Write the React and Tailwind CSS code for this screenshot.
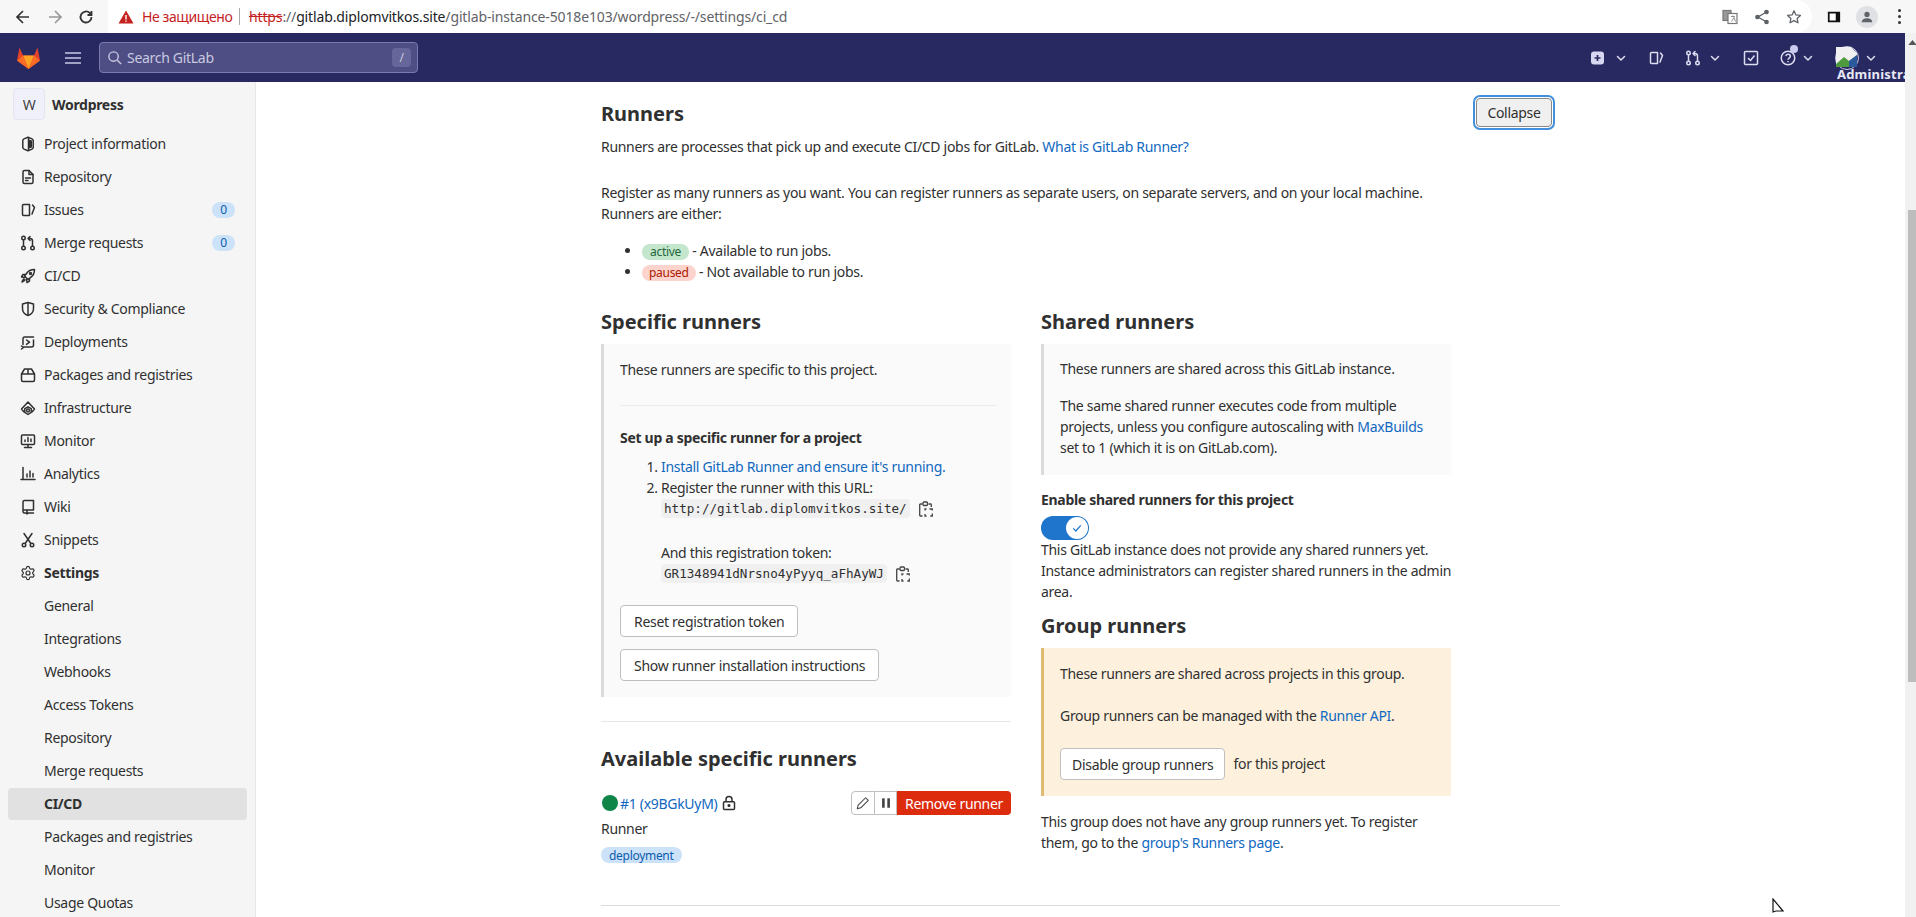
import React from 'react'
import { Settings } from 'lucide-react'

const I = ({ children, className = 'w-4 h-4' }) => (
  <svg viewBox="0 0 16 16" fill="none" stroke="currentColor" strokeWidth="1.5" strokeLinecap="round" strokeLinejoin="round" className={className + ' shrink-0'}>
    {children}
  </svg>
)

const ProjectIcon = () => <I><path d="M8 1.3 4 2.9c-.8.3-1.2 1-1.2 1.8v6.6c0 .8.4 1.500 1.200 1.800l4 1.600 4-1.600c.8-.3 1.200-1 1.200-1.800V4.700c0-.8-.4-1.500-1.200-1.800L8 1.300Z" /><path d="M9 2v12M9 3.500l3 1v7l-3 1" fill="currentColor" stroke="none" /><path d="M8.500 2v12" /></I>
const DocIcon = () => <I><path d="M3 3c0-1 .6-1.500 1.500-1.500H9L13 5.500v7.500c0 1-.6 1.500-1.500 1.500h-7C3.600 14.500 3 14 3 13V3Z" /><path d="M9 1.500v4h4M5.500 9h5M5.500 11.500h2.500" /></I>
const IssueIcon = () => <I><path d="M9.500 2.500H3.500c-.6 0-1 .4-1 1v9c0 .6.4 1 1 1h6V2.500Z" /><path d="M12.500 3 14.500 5.500 12 12" /></I>
const MrIcon = () => <I><circle cx="3.500" cy="3" r="1.750" /><circle cx="3.500" cy="13" r="1.750" /><circle cx="12.500" cy="13" r="1.750" /><path d="M3.500 4.750v6.500M12.500 11.250V6c0-1.500-.8-2.500-2.500-2.500H8M10 1.500 8 3.500l2 2" /></I>
const RocketIcon = () => <I><path d="M14.500 1.500c-4 0-6.500 1.500-8 4L4.500 8l3.500 3.500 2.500-2c2.500-1.500 4-4 4-8Z" /><path d="M5.500 6.500H3L1.500 9l3 .5M9.500 10.500V13L7 14.500l-.5-3M4 11c-1 .5-1.500 1.500-2 3 1.500-.5 2.500-1 3-2" /><circle cx="10.500" cy="5.500" r="1" /></I>
const ShieldIcon = () => <I><path d="M8 1.500 2.500 3v4.500c0 3.500 2.500 6 5.500 7 3-1 5.500-3.500 5.500-7V3L8 1.500Z" /><path d="M8 2v12" /></I>
const DeployIcon = () => <I><path d="M3 10.500V4.500c0-.8.6-1.500 1.500-1.500h9M13.500 6v5c0 1.200-.8 2-2 2H3.500M1.500 12l2 1.500-2 1.500" /><path d="m6.500 6 3 2.200-3 2.200" /></I>
const PackageIcon = () => <I><path d="M1.500 7v6c0 .8.6 1.500 1.500 1.500h10c.9 0 1.500-.7 1.500-1.500V7l-3-5H4.500l-3 5ZM1.500 7h13M8 2v5" /></I>
const InfraIcon = () => <I><path d="M4 12 1.500 9 8 2l6.500 7-2.500 3" /><circle cx="8" cy="10.500" r="1.400" /><path d="m8 6.800 3.200 1.900v3.600L8 14.500l-3.200-2.200V8.700L8 6.800Z" /></I>
const MonitorIcon = () => <I><rect x="1.500" y="2" width="13" height="9.500" rx="1" /><path d="M8 11.500V14M4.500 14.500h7M5 8.500V7M8 8.500V4.500M11 8.500V6" /></I>
const AnalyticsIcon = () => <I><path d="M3 1.500v12M1 13.500h14M7 11V8M10 11V5M13 11V7.500" /></I>
const WikiIcon = () => <I><path d="M13.500 11V1.500H4.500c-1 0-1.500.6-1.500 1.500v9.500c0 1 .6 1.500 1.500 1.500h9M3 11h10.500M7 11v4l1.500-1" /></I>
const SnippetIcon = () => <I><path d="M4 1.500 10.500 11M12 1.500 5.500 11" /><circle cx="4" cy="13" r="1.750" /><circle cx="12" cy="13" r="1.750" /></I>
const CopyIcon = () => (
  <svg viewBox="0 0 14 16" fill="none" stroke="currentColor" strokeWidth="1.300" className="w-[14px] h-4 shrink-0 text-[#444]">
    <path d="M3.500 3H1.500c-.5 0-.8.3-.8.8v10.400c0 .5.3.8.8.8h2M9.500 3h2c.5 0 .8.3.8.8V6" />
    <rect x="4" y="1" width="4.500" height="3.500" rx="1" />
    <path d="M7.500 8h-1.500v1.500M10.500 8h2.800v1.500M13.300 12.500V15h-2M6 13v2h1.500" />
  </svg>
)
const Chev = () => (
  <svg viewBox="0 0 12 12" fill="none" stroke="currentColor" strokeWidth="1.500" strokeLinecap="round" strokeLinejoin="round" className="w-3 h-3 shrink-0">
    <path d="m2.500 4.500 3.500 3.500 3.500-3.500" />
  </svg>
)

const navTop = [
  ['Project information', ProjectIcon],
  ['Repository', DocIcon],
  ['Issues', IssueIcon, '0'],
  ['Merge requests', MrIcon, '0'],
  ['CI/CD', RocketIcon],
  ['Security & Compliance', ShieldIcon],
  ['Deployments', DeployIcon],
  ['Packages and registries', PackageIcon],
  ['Infrastructure', InfraIcon],
  ['Monitor', MonitorIcon],
  ['Analytics', AnalyticsIcon],
  ['Wiki', WikiIcon],
  ['Snippets', SnippetIcon],
]
const navSub = ['General', 'Integrations', 'Webhooks', 'Access Tokens', 'Repository', 'Merge requests', 'CI/CD', 'Packages and registries', 'Monitor', 'Usage Quotas']

const Link = ({ children }) => <a className="text-[#1068bf]">{children}</a>
const Btn = ({ children, pad = 'px-[13px]' }) => (
  <button className={'block h-8 bg-white border border-[#bfbfbf] rounded text-[#303030] whitespace-nowrap ' + pad}>{children}</button>
)
const H4 = ({ children }) => <h4 className="text-[20px] leading-6 font-bold text-[#303030] tracking-normal">{children}</h4>

function BrowserBar() {
  return (
    <div className="h-[33px] bg-[#f7f7f7] flex items-center text-[#5f6368]">
      <svg viewBox="0 0 16 16" className="w-4 h-4 ml-[15px] text-[#333]" fill="none" stroke="currentColor" strokeWidth="1.700"><path d="M14 8H2.500M8 2 2 8l6 6" /></svg>
      <svg viewBox="0 0 16 16" className="w-4 h-4 ml-[16px] text-[#999]" fill="none" stroke="currentColor" strokeWidth="1.700"><path d="M2 8h11.500M8 2l6 6-6 6" /></svg>
      <svg viewBox="0 0 16 16" className="w-4 h-4 ml-[15px] text-[#333]" fill="none" stroke="currentColor" strokeWidth="1.800"><path d="M13.500 8a5.500 5.500 0 1 1-1.600-3.900L13.500 6M13.500 2v4h-4" /></svg>
      <div className="ml-[14px] w-[1704px] h-full bg-white rounded-r-full flex items-center">
        <svg viewBox="0 0 16 16" className="w-4 h-4 ml-[10px]"><path d="M8 1.500 15.500 14.500H.5L8 1.500Z" fill="#c5221f" /><path d="M8 6v4.500M8 11.500v1.200" stroke="#fff" strokeWidth="1.400" /></svg>
        <span className="ml-[8px] text-[14px] text-[#c5221f] tracking-[-0.4px] w-[92px] whitespace-nowrap">Не защищено</span>
        <span className="w-px h-[17px] bg-[#aaa] ml-[5px]" />
        <span className="ml-[9px] text-[14px] tracking-[-0.14px] whitespace-nowrap">
          <span className="text-[#c5221f] line-through">https</span>
          <span className="text-[#5f6368]">://</span>
          <span className="text-[#202124]">gitlab.diplomvitkos.site</span>
          <span className="text-[#5f6368]">/gitlab-instance-5018e103/wordpress/-/settings/ci_cd</span>
        </span>
        <svg viewBox="0 0 16 16" className="w-4 h-4 ml-auto" fill="none" stroke="#777" strokeWidth="1.200"><rect x="1" y="1.500" width="8" height="10" fill="#999" /><rect x="6" y="4.500" width="9" height="10" fill="#fff" /><path d="M9 7.500h4M11 6.500v1M9.500 12.500l2.500-4 1.500 4" strokeWidth=".8" /></svg>
        <svg viewBox="0 0 16 16" className="w-4 h-4 ml-[16px]" fill="none" stroke="#5f6368" strokeWidth="1.300"><path d="M12.500 3 4 8l8.500 5" /><circle cx="12.500" cy="3" r="1.700" fill="#5f6368" /><circle cx="3.500" cy="8" r="1.700" fill="#5f6368" /><circle cx="12.500" cy="13" r="1.700" fill="#5f6368" /></svg>
        <svg viewBox="0 0 16 16" className="w-4 h-4 ml-[16px] mr-[10px]" fill="none" stroke="#5f6368" strokeWidth="1.300" strokeLinejoin="round"><path d="m8 1.800 1.900 4.100 4.500.5-3.300 3 .9 4.400L8 11.600l-4 2.200.9-4.400-3.300-3 4.500-.5L8 1.800Z" /></svg>
      </div>
      <svg viewBox="0 0 16 16" className="w-[14px] h-[14px] ml-[15px]"><rect x="1" y="2" width="14" height="12" fill="#111" /><rect x="3" y="4" width="7" height="8" fill="#fff" /></svg>
      <div className="ml-[15px] w-[22px] h-[22px] rounded-full bg-[#dfe1e5] flex items-center justify-center">
        <svg viewBox="0 0 16 16" className="w-[14px] h-[14px]" fill="#5f6368"><circle cx="8" cy="5" r="3" /><path d="M2 14c0-3 3-4.500 6-4.500s6 1.500 6 4.500H2Z" /></svg>
      </div>
      <div className="ml-[20px] flex flex-col gap-[3px]">
        <span className="w-[3px] h-[3px] rounded-full bg-[#333]" />
        <span className="w-[3px] h-[3px] rounded-full bg-[#333]" />
        <span className="w-[3px] h-[3px] rounded-full bg-[#333]" />
      </div>
    </div>
  )
}

function TopNav() {
  return (
    <header className="h-[49px] shrink-0 bg-[#292961] flex items-center text-[#d1d0d3] relative">
      <svg viewBox="0 0 25 24" className="w-[25px] h-[24px] ml-[16px]">
        <path d="M12.500 23 1 14.500 3.500 1.500l3.500 8h11l3.500-8L24 14.500 12.500 23Z" fill="#e24329" />
        <path d="M12.500 23 7 9.500h11L12.500 23Z" fill="#fca326" />
        <path d="M12.500 23 1 14.500l2-1.500L12.500 23Z" fill="#fc6d26" />
        <path d="M12.500 23 24 14.500l-2-1.500-9.500 10Z" fill="#fc6d26" />
        <path d="M12.500 23 3 13l4-3.500L12.500 23ZM12.500 23 22 13l-4-3.500L12.500 23Z" fill="#fc6d26" />
      </svg>
      <svg viewBox="0 0 16 16" className="w-4 h-4 ml-[24px]" fill="none" stroke="#c9c9e8" strokeWidth="1.500"><path d="M0 3h16M0 8h16M0 13h16" /></svg>
      <div className="ml-[18px] w-[319px] h-[31px] rounded bg-[#4e4e84] border border-[#7a7ab0] flex items-center text-[#c9c9e0]">
        <svg viewBox="0 0 16 16" className="w-[15px] h-[15px] ml-[7px]" fill="none" stroke="currentColor" strokeWidth="1.500"><circle cx="7" cy="7" r="5" /><path d="m11 11 4 4" /></svg>
        <span className="ml-[5px] text-[14px]">Search GitLab</span>
        <span className="ml-auto mr-[6px] w-[19px] h-[19px] rounded-sm bg-[#66669a] text-[12px] flex items-center justify-center">/</span>
      </div>
      <div className="ml-auto mr-[28px] flex items-center text-[#dcdcf0]">
        <svg viewBox="0 0 16 16" className="w-4 h-4"><rect x="1" y="1.500" width="13" height="13" rx="3" fill="#d7d7f2" /><path d="M7.500 5v6M4.500 8h6" stroke="#292961" strokeWidth="1.700" /></svg>
        <span className="ml-[9px]"><Chev /></span>
        <span className="ml-[21px]"><IssueIcon /></span>
        <span className="ml-[21px]"><MrIcon /></span>
        <span className="ml-[8px]"><Chev /></span>
        <svg viewBox="0 0 16 16" className="w-4 h-4 ml-[22px]" fill="none" stroke="currentColor" strokeWidth="1.500" strokeLinejoin="round"><rect x="1.500" y="1.500" width="13" height="13" rx="1" /><path d="m5 8 2.500 2.500L11.500 5.500" /></svg>
        <span className="ml-[21px] relative">
          <svg viewBox="0 0 16 16" className="w-4 h-4" fill="none" stroke="currentColor" strokeWidth="1.500"><circle cx="8" cy="8" r="6.750" /><path d="M5.800 6.200C6 4.800 7 4.300 8 4.300c1.300 0 2.300.8 2.300 2 0 1.800-2.300 1.700-2.300 3.500M8 11v1.300" /></svg>
          <span className="absolute -top-[5px] left-[10px] w-2 h-2 rounded-full bg-[#cbcbf0]" />
        </span>
        <span className="ml-[6px]"><Chev /></span>
        <span className="ml-[21px] relative w-6 h-6 rounded-full border border-[#c9c9e8] overflow-visible">
          <svg viewBox="0 0 24 24" className="w-6 h-6 absolute -top-px -left-px">
            <path d="M1 1h15l6 6v14H1V1Z" fill="#f1f1f1" />
            <path d="M1 18 9 11l5 4 8-6v12H1Z" fill="#4f9a3e" />
            <path d="M14 15l8-6v12h-8Z" fill="#2a5a9c" />
          </svg>
        </span>
        <span className="ml-[6px]"><Chev /></span>
      </div>
      <span className="absolute top-[33px] left-[1837px] w-[68px] overflow-hidden whitespace-nowrap text-[13px] leading-4 font-bold text-[#e8e8f5] tracking-[0.2px]">Administrator</span>
    </header>
  )
}

function Sidebar() {
  return (
    <aside className="w-[256px] shrink-0 bg-[#f5f5f5] border-r border-[#e8e8e8] overflow-hidden text-[#303030]">
      <div className="flex items-center h-[46px] pl-[13px] pb-[2px]">
        <span className="w-8 h-8 rounded border border-[#e4e3f2] bg-[#f0f0fa] flex items-center justify-center text-[#444]">W</span>
        <span className="ml-[7px] font-bold">Wordpress</span>
      </div>
      <nav className="px-2">
        {navTop.map(([label, Icon, badge]) => (
          <div key={label} className="h-8 mb-px pb-px flex items-center pl-3 pr-3">
            <Icon />
            <span className="ml-2">{label}</span>
            {badge && <span className="ml-auto h-4 w-[23px] rounded-full bg-[#cbe2f9] text-[#0b5cad] text-[12px] flex items-center justify-center">{badge}</span>}
          </div>
        ))}
        <div className="h-8 mb-px pb-px flex items-center pl-3 font-bold">
          <Settings className="w-4 h-4" strokeWidth={1.8} />
          <span className="ml-2">Settings</span>
        </div>
        {navSub.map((label, i) => (
          <div key={i} className={label === 'CI/CD' ? 'h-8 mb-px pb-px flex items-center pl-9 rounded bg-[#e1e1e1] font-bold' : 'h-8 mb-px pb-px flex items-center pl-9'}>
            {label}
          </div>
        ))}
      </nav>
    </aside>
  )
}

function SpecificRunners() {
  return (
    <div className="w-[410px]">
      <H4>Specific runners</H4>
      <div className="mt-[10px] bg-[#fafafa] border-l-[3px] border-[#dbdbdb] pl-4 pr-[14px] pt-[15px] pb-4">
        <p>These runners are specific to this project.</p>
        <hr className="mt-[25px] border-[#ececec]" />
        <p className="mt-[21px] font-bold">Set up a specific runner for a project</p>
        <ol className="mt-2 pl-[41px] list-decimal">
          <li><Link>Install GitLab Runner and ensure it's running.</Link></li>
          <li>
            Register the runner with this URL:
            <div className="flex items-center h-[21px]">
              <code className="px-[3px] h-[19px] leading-[19px] rounded bg-[#f0f0f0] font-['DejaVu_Sans_Mono',monospace] text-[12.6px] tracking-normal">http://gitlab.diplomvitkos.site/</code>
              <span className="ml-[9px]"><CopyIcon /></span>
            </div>
            <div className="mt-[23px]">And this registration token:</div>
            <div className="flex items-center h-[21px]">
              <code className="px-[3px] h-[19px] leading-[19px] rounded bg-[#f0f0f0] font-['DejaVu_Sans_Mono',monospace] text-[12.6px] tracking-normal">GR1348941dNrsno4yPyyq_aFhAyWJ</code>
              <span className="ml-[9px]"><CopyIcon /></span>
            </div>
          </li>
        </ol>
        <div className="mt-[21px]"><Btn>Reset registration token</Btn></div>
        <div className="mt-3"><Btn>Show runner installation instructions</Btn></div>
      </div>
      <hr className="mt-6 border-[#e8e8e8]" />
      <div className="mt-[25px]"><H4>Available specific runners</H4></div>
      <div className="mt-5 flex items-center justify-between h-6">
        <div className="flex items-center">
          <span className="ml-px w-4 h-4 rounded-full bg-[#108548]" />
          <span className="ml-[2px]"><Link>#1 (x9BGkUyM)</Link></span>
          <svg viewBox="0 0 16 16" className="w-4 h-4 ml-[4px]" fill="none" stroke="#303030" strokeWidth="1.500"><rect x="2.500" y="6.750" width="11" height="7.750" rx="1" /><path d="M5 6.500V4.500a3 3 0 0 1 6 0v2" /><circle cx="8" cy="10.500" r=".8" fill="#303030" /></svg>
        </div>
        <div className="flex h-6">
          <button className="w-6 border border-[#bfbfbf] rounded-l flex items-center justify-center bg-white">
            <svg viewBox="0 0 16 16" className="w-[14px] h-[14px]" fill="none" stroke="#444" strokeWidth="1.200" strokeLinejoin="round"><path d="M11 2 14 5 5.500 13.500 1.500 14.500 2.500 10.500 11 2Z" /></svg>
          </button>
          <button className="w-[22px] border-y border-r border-[#bfbfbf] flex items-center justify-center bg-white">
            <svg viewBox="0 0 16 16" className="w-[14px] h-[14px]" fill="#444"><rect x="3.500" y="2.500" width="3" height="11" rx=".5" /><rect x="9.500" y="2.500" width="3" height="11" rx=".5" /></svg>
          </button>
          <button className="w-[114px] rounded-r bg-[#dd2b0e] text-white whitespace-nowrap">Remove runner</button>
        </div>
      </div>
      <p className="mt-[3px]">Runner</p>
      <span className="mt-2 flex w-fit items-center h-4 px-2 rounded-full bg-[#cbe2f9] text-[#0b5cad] text-[12px]">deployment</span>
    </div>
  )
}

function SharedRunners() {
  return (
    <div className="w-[410px] ml-[30px]">
      <H4>Shared runners</H4>
      <div className="mt-[10px] bg-[#fafafa] border-l-[3px] border-[#dbdbdb] pl-4 pr-4 pt-[14px] pb-[17px]">
        <p>These runners are shared across this GitLab instance.</p>
        <p className="mt-4">The same shared runner executes code from multiple projects, unless you configure autoscaling with <Link>MaxBuilds</Link> set to 1 (which it is on GitLab.com).</p>
      </div>
      <p className="mt-[14px] font-bold">Enable shared runners for this project</p>
      <div className="mt-[6px] w-[48px] h-6 rounded-full bg-[#1f75cb] flex items-center justify-end pr-[1px]">
        <span className="w-[22px] h-[22px] rounded-full bg-white flex items-center justify-center">
          <svg viewBox="0 0 16 16" className="w-3 h-3" fill="none" stroke="#1f75cb" strokeWidth="1.600"><path d="m3 8.500 3.500 3.500L13 4.500" /></svg>
        </span>
      </div>
      <p className="-mt-px whitespace-nowrap">
        This GitLab instance does not provide any shared runners yet.<br />
        Instance administrators can register shared runners in the admin<br />
        area.
      </p>
      <div className="mt-[12px]"><H4>Group runners</H4></div>
      <div className="mt-[10px] bg-[#fdf1dd] border-l-[3px] border-[#e0bb72] pl-4 pr-4 pt-[15px] pb-4">
        <p>These runners are shared across projects in this group.</p>
        <p className="mt-[21px]">Group runners can be managed with the <Link>Runner API</Link>.</p>
        <div className="mt-[22px] flex items-center">
          <Btn pad="px-[11px]">Disable group runners</Btn>
          <span className="ml-2 -mt-[2px]">for this project</span>
        </div>
      </div>
      <p className="mt-[15px]">This group does not have any group runners yet. To register them, go to the <Link>group's Runners page</Link>.</p>
    </div>
  )
}

export default function App() {
  return (
    <div className="w-[1916px] h-[917px] overflow-hidden bg-white flex flex-col font-['Noto_Sans',sans-serif] text-[14px] leading-[21px] text-[#303030] tracking-[-0.3px] relative">
      <BrowserBar />
      <div className="flex flex-1 min-h-0">
        <div className="flex-1 flex flex-col min-w-0">
          <TopNav />
          <div className="flex flex-1 min-h-0">
            <Sidebar />
            <main className="flex-1 pl-[345px] overflow-hidden">
              <div className="w-[959px]">
                <div className="flex justify-between items-start">
                  <div className="w-[849px] pt-[20px]">
                    <H4>Runners</H4>
                    <p className="mt-[10px]">Runners are processes that pick up and execute CI/CD jobs for GitLab. <Link>What is GitLab Runner?</Link></p>
                    <p className="mt-[25px]">Register as many runners as you want. You can register runners as separate users, on separate servers, and on your local machine. Runners are either:</p>
                    <ul className="mt-4 pl-[41px] list-disc">
                      <li><span className="inline-block h-4 leading-4 px-2 rounded-full bg-[#c3e6cd] text-[#24663b] text-[12px]">active</span> - Available to run jobs.</li>
                      <li><span className="inline-block h-4 leading-4 px-[7px] rounded-full bg-[#fdd4cd] text-[#ae1800] text-[12px]">paused</span> - Not available to run jobs.</li>
                    </ul>
                  </div>
                  <button className="mt-4 mr-2 w-[76px] h-[29px] rounded border border-[#888] bg-[#f0f0f0] text-[#303030] outline-2 outline-offset-1 outline-[#428fdc]">Collapse</button>
                </div>
                <div className="mt-[28px] flex">
                  <SpecificRunners />
                  <SharedRunners />
                </div>
                <hr className="mt-[42px] border-[#dcdcde]" />
              </div>
            </main>
          </div>
        </div>
        <div className="w-[11px] shrink-0 bg-[#f1f1f1] flex flex-col items-center">
          <svg viewBox="0 0 10 6" className="w-[9px] h-[5px] mt-[7px] ml-[3px]"><path d="M5 0 10 6H0Z" fill="#555" /></svg>
          <div className="mt-[165px] ml-[3px] w-[9px] h-[472px] bg-[#bdbdbd]" />
        </div>
      </div>
      <svg viewBox="0 0 14 16" className="absolute left-[1771px] top-[898px] w-[14px] h-[16px]" fill="none" stroke="#111" strokeWidth="1.200"><path d="M2 1v13l3-1h7L2 1Z" /></svg>
    </div>
  )
}
